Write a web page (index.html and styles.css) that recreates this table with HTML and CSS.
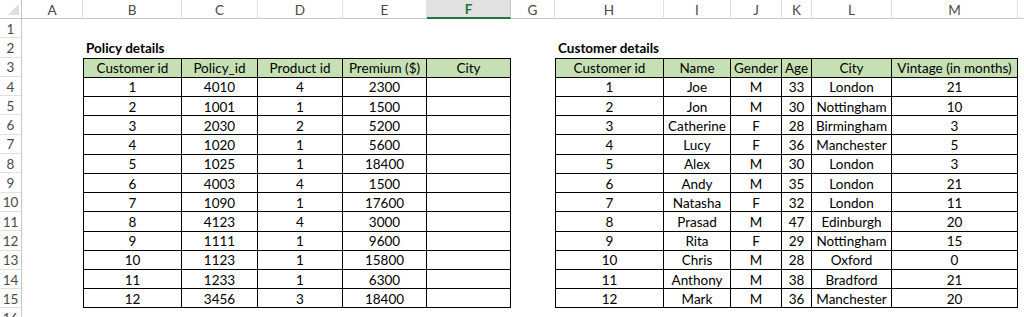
FILE: index.html
```html
<!DOCTYPE html>
<html>
<head>
<meta charset="utf-8">
<link rel="stylesheet" href="styles.css">
</head>
<body>
<div class="sheet">
  <div class="corner"><span class="tri"></span></div>
  <div class="colhead">A</div>
  <div class="colhead">B</div>
  <div class="colhead">C</div>
  <div class="colhead">D</div>
  <div class="colhead">E</div>
  <div class="colhead sel">F</div>
  <div class="colhead">G</div>
  <div class="colhead">H</div>
  <div class="colhead">I</div>
  <div class="colhead">J</div>
  <div class="colhead">K</div>
  <div class="colhead">L</div>
  <div class="colhead">M</div>
  <div class="colhead filler"></div>

  <div class="rowheads">
    <div class="rh">1</div><div class="rh">2</div><div class="rh">3</div><div class="rh">4</div>
    <div class="rh">5</div><div class="rh">6</div><div class="rh">7</div><div class="rh">8</div>
    <div class="rh">9</div><div class="rh">10</div><div class="rh">11</div><div class="rh">12</div>
    <div class="rh">13</div><div class="rh">14</div><div class="rh">15</div><div class="rh">16</div>
  </div>

  <div class="title title-policy">Policy details</div>
  <div class="title title-customer">Customer details</div>

  <div class="tbl policy">
    <div class="c h">Customer id</div><div class="c h">Policy_id</div><div class="c h">Product id</div><div class="c h">Premium ($)</div><div class="c h">City</div>
    <div class="c">1</div><div class="c">4010</div><div class="c">4</div><div class="c">2300</div><div class="c"></div>
    <div class="c">2</div><div class="c">1001</div><div class="c">1</div><div class="c">1500</div><div class="c"></div>
    <div class="c">3</div><div class="c">2030</div><div class="c">2</div><div class="c">5200</div><div class="c"></div>
    <div class="c">4</div><div class="c">1020</div><div class="c">1</div><div class="c">5600</div><div class="c"></div>
    <div class="c">5</div><div class="c">1025</div><div class="c">1</div><div class="c">18400</div><div class="c"></div>
    <div class="c">6</div><div class="c">4003</div><div class="c">4</div><div class="c">1500</div><div class="c"></div>
    <div class="c">7</div><div class="c">1090</div><div class="c">1</div><div class="c">17600</div><div class="c"></div>
    <div class="c">8</div><div class="c">4123</div><div class="c">4</div><div class="c">3000</div><div class="c"></div>
    <div class="c">9</div><div class="c">1111</div><div class="c">1</div><div class="c">9600</div><div class="c"></div>
    <div class="c">10</div><div class="c">1123</div><div class="c">1</div><div class="c">15800</div><div class="c"></div>
    <div class="c">11</div><div class="c">1233</div><div class="c">1</div><div class="c">6300</div><div class="c"></div>
    <div class="c">12</div><div class="c">3456</div><div class="c">3</div><div class="c">18400</div><div class="c"></div>
  </div>

  <div class="tbl customer">
    <div class="c h">Customer id</div><div class="c h">Name</div><div class="c h">Gender</div><div class="c h">Age</div><div class="c h">City</div><div class="c h">Vintage (in months)</div>
    <div class="c">1</div><div class="c">Joe</div><div class="c">M</div><div class="c">33</div><div class="c">London</div><div class="c">21</div>
    <div class="c">2</div><div class="c">Jon</div><div class="c">M</div><div class="c">30</div><div class="c">Nottingham</div><div class="c">10</div>
    <div class="c">3</div><div class="c">Catherine</div><div class="c">F</div><div class="c">28</div><div class="c">Birmingham</div><div class="c">3</div>
    <div class="c">4</div><div class="c">Lucy</div><div class="c">F</div><div class="c">36</div><div class="c">Manchester</div><div class="c">5</div>
    <div class="c">5</div><div class="c">Alex</div><div class="c">M</div><div class="c">30</div><div class="c">London</div><div class="c">3</div>
    <div class="c">6</div><div class="c">Andy</div><div class="c">M</div><div class="c">35</div><div class="c">London</div><div class="c">21</div>
    <div class="c">7</div><div class="c">Natasha</div><div class="c">F</div><div class="c">32</div><div class="c">London</div><div class="c">11</div>
    <div class="c">8</div><div class="c">Prasad</div><div class="c">M</div><div class="c">47</div><div class="c">Edinburgh</div><div class="c">20</div>
    <div class="c">9</div><div class="c">Rita</div><div class="c">F</div><div class="c">29</div><div class="c">Nottingham</div><div class="c">15</div>
    <div class="c">10</div><div class="c">Chris</div><div class="c">M</div><div class="c">28</div><div class="c">Oxford</div><div class="c">0</div>
    <div class="c">11</div><div class="c">Anthony</div><div class="c">M</div><div class="c">38</div><div class="c">Bradford</div><div class="c">21</div>
    <div class="c">12</div><div class="c">Mark</div><div class="c">M</div><div class="c">36</div><div class="c">Manchester</div><div class="c">20</div>
  </div>
</div>
</body>
</html>
```

FILE: styles.css
```css
html, body {
  margin: 0;
  padding: 0;
  background: #ffffff;
}

body {
  width: 1024px;
  height: 317px;
  overflow: hidden;
  font-family: Lato, "Liberation Sans", sans-serif;
  font-size: 13.5px;
  color: #000000;
}

.sheet {
  display: grid;
  grid-template-columns: 22px 61px 99px 76px 85px 84px 84px 44px 109px 67px 51px 30px 80px 126px 1fr;
  grid-template-rows: 19px repeat(16, 19.3px);
}

.corner {
  grid-column: 1;
  grid-row: 1;
  border-right: 1px solid #c6c6c6;
  border-bottom: 1px solid #c6c6c6;
  display: flex;
  justify-content: flex-end;
  align-items: flex-end;
  padding: 0 2px 3px 0;
}

.tri {
  width: 0;
  height: 0;
  border-left: 11px solid transparent;
  border-bottom: 11px solid #dfdfdf;
}

.colhead {
  grid-row: 1;
  display: flex;
  align-items: center;
  justify-content: center;
  border-right: 1px solid #e1e1e1;
  border-bottom: 1px solid #c6c6c6;
  color: #4a4a4a;
  font-size: 13.5px;
  padding-top: 1px;
}

.colhead.sel {
  background: #e1e1e1;
  color: #217346;
  font-weight: bold;
  border-bottom: 2px solid #217346;
  border-right-color: #c6c6c6;
}

.colhead.filler {
  border-right: none;
}

.rowheads {
  grid-column: 1;
  grid-row: 2 / 18;
  display: grid;
  grid-auto-rows: 19.3px;
  border-right: 1px solid #c6c6c6;
}

.rh {
  display: flex;
  align-items: center;
  justify-content: center;
  border-bottom: 1px solid #e1e1e1;
  color: #4a4a4a;
  font-size: 13.5px;
  padding-top: 1px;
}

.title {
  grid-row: 3;
  align-self: end;
  font-weight: bold;
  font-size: 13.5px;
  padding: 0 0 2px 3px;
  white-space: nowrap;
}

.title-policy {
  grid-column: 3 / 6;
}

.title-customer {
  grid-column: 9 / 12;
}

.tbl {
  grid-row: 4 / 17;
  display: grid;
  grid-template-rows: repeat(13, 1fr);
  border-left: 1px solid #000000;
  border-top: 1px solid #000000;
}

.policy {
  grid-column: 3 / 8;
  grid-template-columns: 98px 76px 85px 84px 84px;
}

.customer {
  grid-column: 9 / 15;
  grid-template-columns: 108px 67px 51px 30px 80px 126px;
}

.c {
  display: flex;
  align-items: center;
  justify-content: center;
  border-right: 1px solid #000000;
  border-bottom: 1px solid #000000;
  white-space: nowrap;
  overflow: hidden;
  padding-top: 1px;
}

.c.h {
  background: #c6e0b4;
}
```
